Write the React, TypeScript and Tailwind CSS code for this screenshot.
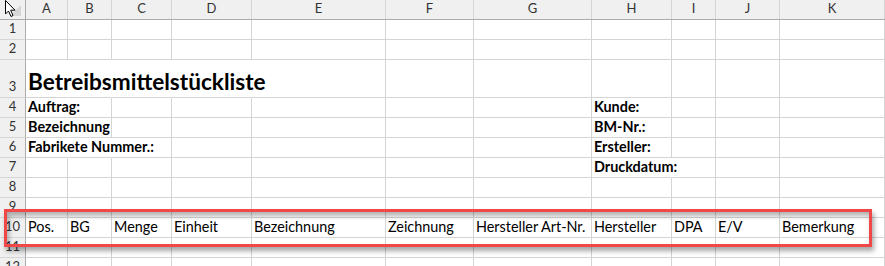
import React from "react";

type Row = {
  n: number;
  h: number;
  cells: (string | null)[];
  hide?: number[];
  bold?: boolean;
  title?: boolean;
};

const colW = ["w-[42px]", "w-[44px]", "w-[60px]", "w-[80px]", "w-[134px]", "w-[88px]", "w-[118px]", "w-[80px]", "w-[44px]", "w-[64px]"];
const letters = ["A", "B", "C", "D", "E", "F", "G", "H", "I", "J", "K"];

const E = (): (string | null)[] => Array(11).fill(null);

function mk(n: number, h: number, set: Record<number, string> = {}, opts: Partial<Row> = {}): Row {
  const cells = E();
  Object.entries(set).forEach(([k, v]) => (cells[Number(k)] = v));
  return { n, h, cells, ...opts };
}

const rows: Row[] = [
  mk(1, 20),
  mk(2, 20),
  mk(3, 38, { 0: "Betreibsmittelstückliste" }, { hide: [0, 1, 2, 3], title: true }),
  mk(4, 20, { 0: "Auftrag:", 7: "Kunde:" }, { hide: [0], bold: true }),
  mk(5, 20, { 0: "Bezeichnung", 7: "BM-Nr.:" }, { hide: [0], bold: true }),
  mk(6, 20, { 0: "Fabrikete Nummer.:", 7: "Ersteller:" }, { hide: [0, 1], bold: true }),
  mk(7, 20, { 7: "Druckdatum:" }, { hide: [7], bold: true }),
  mk(8, 20),
  mk(9, 20),
  mk(10, 20, {
    0: "Pos.",
    1: "BG",
    2: "Menge",
    3: "Einheit",
    4: "Bezeichnung",
    5: "Zeichnung",
    6: "Hersteller Art-Nr.",
    7: "Hersteller",
    8: "DPA",
    9: "E/V",
    10: "Bemerkung",
  }),
  mk(11, 20),
  mk(12, 20),
];

const font = { fontFamily: "Lato, 'Liberation Sans', sans-serif" };

export default function App() {
  return (
    <div className="relative w-[885px] h-[266px] overflow-hidden bg-white text-black" style={font}>
      {/* column header */}
      <div className="flex h-[20px] bg-[#f0f0f0] border-b border-[#ababab]">
        <div className="relative w-[26px] shrink-0 border-r border-[#ababab]">
          <svg className="absolute left-0 top-0" width="26" height="19" viewBox="0 0 26 19">
            <polygon points="21,5 21,16 10,16" fill="#d6d6d6" />
            <path d="M5.5 0.5 L5.5 14 L8.5 11 L11 16.5 L13 15.5 L10.7 10.2 L15 10.2 Z" fill="#fff" stroke="#000" strokeWidth="1" strokeLinejoin="round" />
          </svg>
        </div>
        {letters.map((l, i) => (
          <div
            key={l}
            className={`${i < 10 ? colW[i] + " shrink-0" : "flex-1"} border-r border-[#d5d5d5] flex items-end justify-center pb-[3px] text-[13px] leading-[15px] text-[#333]`}
          >
            {l}
          </div>
        ))}
      </div>
      {rows.map((r) => (
        <div key={r.n} className={`flex ${r.h === 38 ? "h-[38px]" : "h-[20px]"}`}>
          <div className="w-[26px] shrink-0 bg-[#f0f0f0] border-r border-b border-r-[#ababab] border-b-[#d5d5d5] flex items-end justify-center pb-[3px] text-[13px] leading-[15px] text-[#333]">
            {r.n}
          </div>
          {r.cells.map((c, i) => {
            const hidden = r.hide?.includes(i);
            return (
              <div
                key={i}
                className={`${i < 10 ? colW[i] + " shrink-0" : "flex-1"} border-b border-r border-[#d4d4d4] ${hidden ? "border-r-transparent" : ""} flex items-end`}
              >
                {c && (
                  <span
                    className={`whitespace-nowrap pl-[2px] ${
                      r.title
                        ? "text-[22.6px] leading-[26px] font-bold pb-[2px]"
                        : `text-[14.4px] leading-[18px] pb-[1px] ${r.bold ? "font-bold" : ""}`
                    }`}
                  >
                    {c}
                  </span>
                )}
              </div>
            );
          })}
        </div>
      ))}
      {/* annotation */}
      <div className="absolute left-[4px] top-[209px] w-[868px] h-[38px] border-[3px] border-[#f04848] shadow-[2px_4px_5px_rgba(0,0,0,0.35),inset_2px_4px_5px_rgba(0,0,0,0.3)]" />
    </div>
  );
}
